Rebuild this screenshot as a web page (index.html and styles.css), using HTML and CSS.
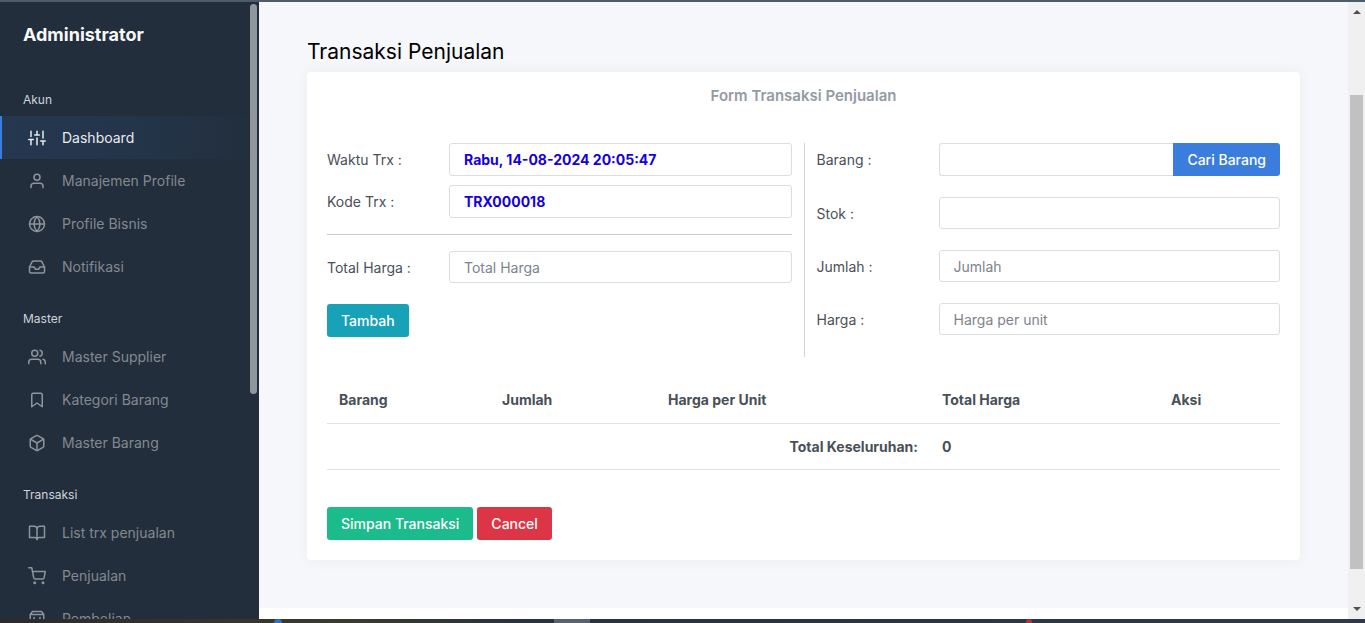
FILE: index.html
```
<!DOCTYPE html>
<html lang="id">
<head>
    <meta charset="UTF-8">
    <meta name="viewport" content="width=device-width, initial-scale=1.0">
    <title>Transaksi Penjualan</title>
    <link rel="stylesheet" href="styles.css">
</head>
<body>
    <div class="topline"></div>
    <div class="wrapper">
        <nav class="sidebar">
            <a class="sidebar-brand" href="#">Administrator</a>
            <h6 class="sidebar-header">Akun</h6>
            <a class="sidebar-link active" href="#">
                <svg viewBox="0 0 24 24"><path d="M4 21v-7M4 10V3M12 21v-9M12 8V3M20 21v-5M20 12V3M1 14h6M9 8h6M17 16h6"/></svg>
                Dashboard
            </a>
            <a class="sidebar-link" href="#">
                <svg viewBox="0 0 24 24"><path d="M20 21v-2a4 4 0 0 0-4-4H8a4 4 0 0 0-4 4v2"/><circle cx="12" cy="7" r="4"/></svg>
                Manajemen Profile
            </a>
            <a class="sidebar-link" href="#">
                <svg viewBox="0 0 24 24"><circle cx="12" cy="12" r="10"/><path d="M2 12h20M12 2a15.3 15.3 0 0 1 4 10 15.3 15.3 0 0 1-4 10 15.3 15.3 0 0 1-4-10 15.3 15.3 0 0 1 4-10z"/></svg>
                Profile Bisnis
            </a>
            <a class="sidebar-link" href="#">
                <svg viewBox="0 0 24 24"><path d="M22 12h-6l-2 3h-4l-2-3H2"/><path d="M5.45 5.11L2 12v6a2 2 0 0 0 2 2h16a2 2 0 0 0 2-2v-6l-3.45-6.89A2 2 0 0 0 16.76 4H7.24a2 2 0 0 0-1.79 1.11z"/></svg>
                Notifikasi
            </a>
            <h6 class="sidebar-header">Master</h6>
            <a class="sidebar-link" href="#">
                <svg viewBox="0 0 24 24"><path d="M17 21v-2a4 4 0 0 0-4-4H5a4 4 0 0 0-4 4v2"/><circle cx="9" cy="7" r="4"/><path d="M23 21v-2a4 4 0 0 0-3-3.87M16 3.13a4 4 0 0 1 0 7.75"/></svg>
                Master Supplier
            </a>
            <a class="sidebar-link" href="#">
                <svg viewBox="0 0 24 24"><path d="M19 21l-7-5-7 5V5a2 2 0 0 1 2-2h10a2 2 0 0 1 2 2z"/></svg>
                Kategori Barang
            </a>
            <a class="sidebar-link" href="#">
                <svg viewBox="0 0 24 24"><path d="M21 16V8a2 2 0 0 0-1-1.73l-7-4a2 2 0 0 0-2 0l-7 4A2 2 0 0 0 3 8v8a2 2 0 0 0 1 1.73l7 4a2 2 0 0 0 2 0l7-4A2 2 0 0 0 21 16z"/><path d="M3.27 6.96L12 12.01l8.73-5.05M12 22.08V12"/></svg>
                Master Barang
            </a>
            <h6 class="sidebar-header">Transaksi</h6>
            <a class="sidebar-link" href="#">
                <svg viewBox="0 0 24 24"><path d="M2 3h6a4 4 0 0 1 4 4v14a3 3 0 0 0-3-3H2zM22 3h-6a4 4 0 0 0-4 4v14a3 3 0 0 1 3-3h7z"/></svg>
                List trx penjualan
            </a>
            <a class="sidebar-link" href="#">
                <svg viewBox="0 0 24 24"><circle cx="9" cy="21" r="1"/><circle cx="20" cy="21" r="1"/><path d="M1 1h4l2.68 13.39a2 2 0 0 0 2 1.61h9.72a2 2 0 0 0 2-1.61L23 6H6"/></svg>
                Penjualan
            </a>
            <a class="sidebar-link" href="#">
                <svg viewBox="0 0 24 24"><path d="M6 2L3 6v14a2 2 0 0 0 2 2h14a2 2 0 0 0 2-2V6l-3-4zM3 6h18M16 10a4 4 0 0 1-8 0"/></svg>
                Pembelian
            </a>
            <div class="sidebar-thumb"></div>
        </nav>

        <div class="main">
            <main class="content">
                <h1>Transaksi Penjualan</h1>
                <form class="card">
                    <h5 class="card-title">Form Transaksi Penjualan</h5>
                    <div class="form-cols">
                        <div class="col-left">
                            <div class="form-row">
                                <label for="waktu">Waktu Trx :</label>
                                <input type="text" id="waktu" class="filled" value="Rabu, 14-08-2024 20:05:47" readonly>
                            </div>
                            <div class="form-row">
                                <label for="kode">Kode Trx :</label>
                                <input type="text" id="kode" class="filled" value="TRX000018" readonly>
                            </div>
                            <hr>
                            <div class="form-row">
                                <label for="total">Total Harga :</label>
                                <input type="text" id="total" placeholder="Total Harga">
                            </div>
                            <button type="button" class="btn btn-info">Tambah</button>
                        </div>
                        <div class="col-right">
                            <div class="form-row">
                                <label for="barang">Barang :</label>
                                <div class="input-group">
                                    <input type="text" id="barang">
                                    <button type="button" class="btn btn-primary">Cari Barang</button>
                                </div>
                            </div>
                            <div class="form-row">
                                <label for="stok">Stok :</label>
                                <input type="text" id="stok">
                            </div>
                            <div class="form-row">
                                <label for="jumlah">Jumlah :</label>
                                <input type="text" id="jumlah" placeholder="Jumlah">
                            </div>
                            <div class="form-row">
                                <label for="harga">Harga :</label>
                                <input type="text" id="harga" placeholder="Harga per unit">
                            </div>
                        </div>
                    </div>

                    <table class="table">
                        <thead>
                            <tr>
                                <th class="c-barang">Barang</th>
                                <th class="c-jumlah">Jumlah</th>
                                <th class="c-harga">Harga per Unit</th>
                                <th class="c-total">Total Harga</th>
                                <th>Aksi</th>
                            </tr>
                        </thead>
                        <tfoot>
                            <tr>
                                <th colspan="3" class="text-right">Total Keseluruhan:</th>
                                <th>0</th>
                                <th></th>
                            </tr>
                        </tfoot>
                    </table>

                    <div class="actions">
                        <button type="submit" class="btn btn-success">Simpan Transaksi</button>
                        <button type="button" class="btn btn-danger">Cancel</button>
                    </div>
                </form>
            </main>
            <footer class="footer"></footer>
        </div>

        <div class="scrollbar">
            <span class="arrow-up"></span>
            <div class="scroll-thumb"></div>
            <span class="arrow-down"></span>
        </div>
    </div>
    <div class="taskbar"><span class="task-icon"></span><span class="task-active"></span><span class="task-tray"></span></div>
</body>
</html>
```
FILE: styles.css
```
* {
    box-sizing: border-box;
}
body {
    margin: 0;
    height: 100vh;
    display: flex;
    flex-direction: column;
    overflow: hidden;
    font-family: Inter, 'Liberation Sans', sans-serif;
    font-size: 14px;
    line-height: 21px;
    color: #495057;
    background: #fff;
}
.topline {
    flex: 0 0 2px;
    background: #4d5c69;
}
.wrapper {
    flex: 1;
    min-height: 0;
    display: flex;
}

/* sidebar */
.sidebar {
    position: relative;
    flex: 0 0 259px;
    overflow: hidden;
    background: #222e3c;
}
.sidebar-brand {
    display: block;
    padding: 19px 23px 20px;
    font-size: 18px;
    font-weight: 700;
    line-height: 28px;
    color: #f8f9fa;
    text-decoration: none;
}
.sidebar-header {
    margin: 0;
    padding: 22px 23px 7px;
    font-size: 12px;
    font-weight: 400;
    line-height: 18px;
    color: #ced4da;
}
.sidebar-link {
    display: flex;
    align-items: center;
    gap: 16px;
    height: 43px;
    padding-left: 26px;
    border-left: 2px solid transparent;
    color: #83898f;
    text-decoration: none;
}
.sidebar-link svg {
    width: 18px;
    height: 18px;
    fill: none;
    stroke: #8d949b;
    stroke-width: 2;
    stroke-linecap: round;
    stroke-linejoin: round;
}
.sidebar-link.active {
    color: #e9ecef;
    border-left-color: #3b7ddd;
    background: linear-gradient(90deg, rgba(59, 125, 221, 0.12), rgba(59, 125, 221, 0.09) 50%, transparent);
}
.sidebar-link.active svg {
    stroke: #e9ecef;
}
.sidebar-thumb {
    position: absolute;
    top: 2px;
    right: 2px;
    width: 7px;
    height: 390px;
    border-radius: 4px;
    background: #90969d;
}

/* content */
.main {
    flex: 1;
    min-width: 0;
    display: flex;
    flex-direction: column;
}
.content {
    flex: 1;
    padding: 36px 48px 48px;
    background: #f5f7fb;
}
h1 {
    margin: 0 0 6px;
    font-size: 21px;
    font-weight: 400;
    line-height: 28px;
    color: #000;
}
.card {
    padding: 13px 20px 20px;
    border-radius: 4px;
    background: #fff;
    box-shadow: 0 0 14px rgba(33, 37, 41, 0.05);
}
.card-title {
    margin: 0 0 37px;
    font-size: 15px;
    font-weight: 600;
    line-height: 21px;
    text-align: center;
    color: #939ba2;
}
.form-cols {
    display: grid;
    grid-template-columns: 1fr 1fr;
}
.col-left {
    padding-right: 12px;
}
.col-left .form-row {
    margin-bottom: 9px;
}
.col-left .form-row:nth-of-type(3) {
    margin-bottom: 21px;
}
.col-right {
    display: flex;
    flex-direction: column;
    gap: 21px;
    padding: 0 0 22px 12px;
    border-left: 1px solid #ced4da;
}
.form-row {
    display: flex;
    align-items: center;
}
.form-row label {
    flex: 0 0 122px;
}
.form-row input {
    flex: 1;
    min-width: 0;
    height: 32px;
    padding: 0 14px;
    border: 1px solid #dbdee1;
    border-radius: 3px;
    font: inherit;
    color: #495057;
    background: #fff;
}
.form-row input::placeholder {
    color: #7d848b;
}
.form-row .filled {
    height: 33px;
    font-weight: 700;
    color: #1400e0;
}
hr {
    margin: 16px 0;
    border: 0;
    border-top: 1px solid #c8cbce;
}
.input-group {
    flex: 1;
    display: flex;
}
.input-group input {
    height: 33px;
    border-right: 0;
    border-radius: 3px 0 0 3px;
}
.input-group .btn {
    border-radius: 0 3px 3px 0;
}
.btn {
    height: 33px;
    padding: 0 14px;
    border: 0;
    border-radius: 3px;
    font: inherit;
    font-weight: 500;
    color: #fff;
}
.btn-primary {
    background: #3b7ddd;
}
.btn-info {
    background: #17a2b8;
}
.btn-success {
    background: #1cbb8c;
}
.btn-danger {
    background: #dc3545;
}

.table {
    width: 100%;
    margin: 20px 0 37px;
    table-layout: fixed;
    border-collapse: collapse;
}
.table th {
    height: 46px;
    padding: 0 12px;
    border-bottom: 1px solid #dee2e6;
    font-weight: 700;
    text-align: left;
}
.table .text-right {
    text-align: right;
}
.c-barang {
    width: 163px;
}
.c-jumlah {
    width: 166px;
}
.c-harga {
    width: 274px;
}
.c-total {
    width: 229px;
}
.actions {
    display: flex;
    gap: 4px;
}
.footer {
    flex: 0 0 11px;
    background: #fff;
}

/* window scrollbar */
.scrollbar {
    flex: 0 0 17px;
    display: flex;
    flex-direction: column;
    align-items: center;
    padding: 8px 0;
    background: #f0f0f1;
}
.scroll-thumb {
    width: 13px;
    height: 474px;
    margin: 81px 0 auto;
    background: #c1c1c1;
}
.arrow-up,
.arrow-down {
    border: 4px solid transparent;
}
.arrow-up {
    border-top: 0;
    border-bottom-color: #505050;
}
.arrow-down {
    border-bottom: 0;
    border-top-color: #505050;
}

.taskbar {
    flex: 0 0 4px;
    display: flex;
    background: linear-gradient(90deg, #2b2c2a, #3a3a2c 26%, #27333e 38%, #2c3b47);
}
.task-icon {
    width: 8px;
    margin-left: 274px;
    border-radius: 4px 4px 0 0;
    background: #2f6fc4;
}
.task-active {
    width: 36px;
    margin-left: 272px;
    background: #56626d;
}
.task-tray {
    width: 6px;
    margin-left: 436px;
    border-radius: 3px 3px 0 0;
    background: #b5303a;
}
```
